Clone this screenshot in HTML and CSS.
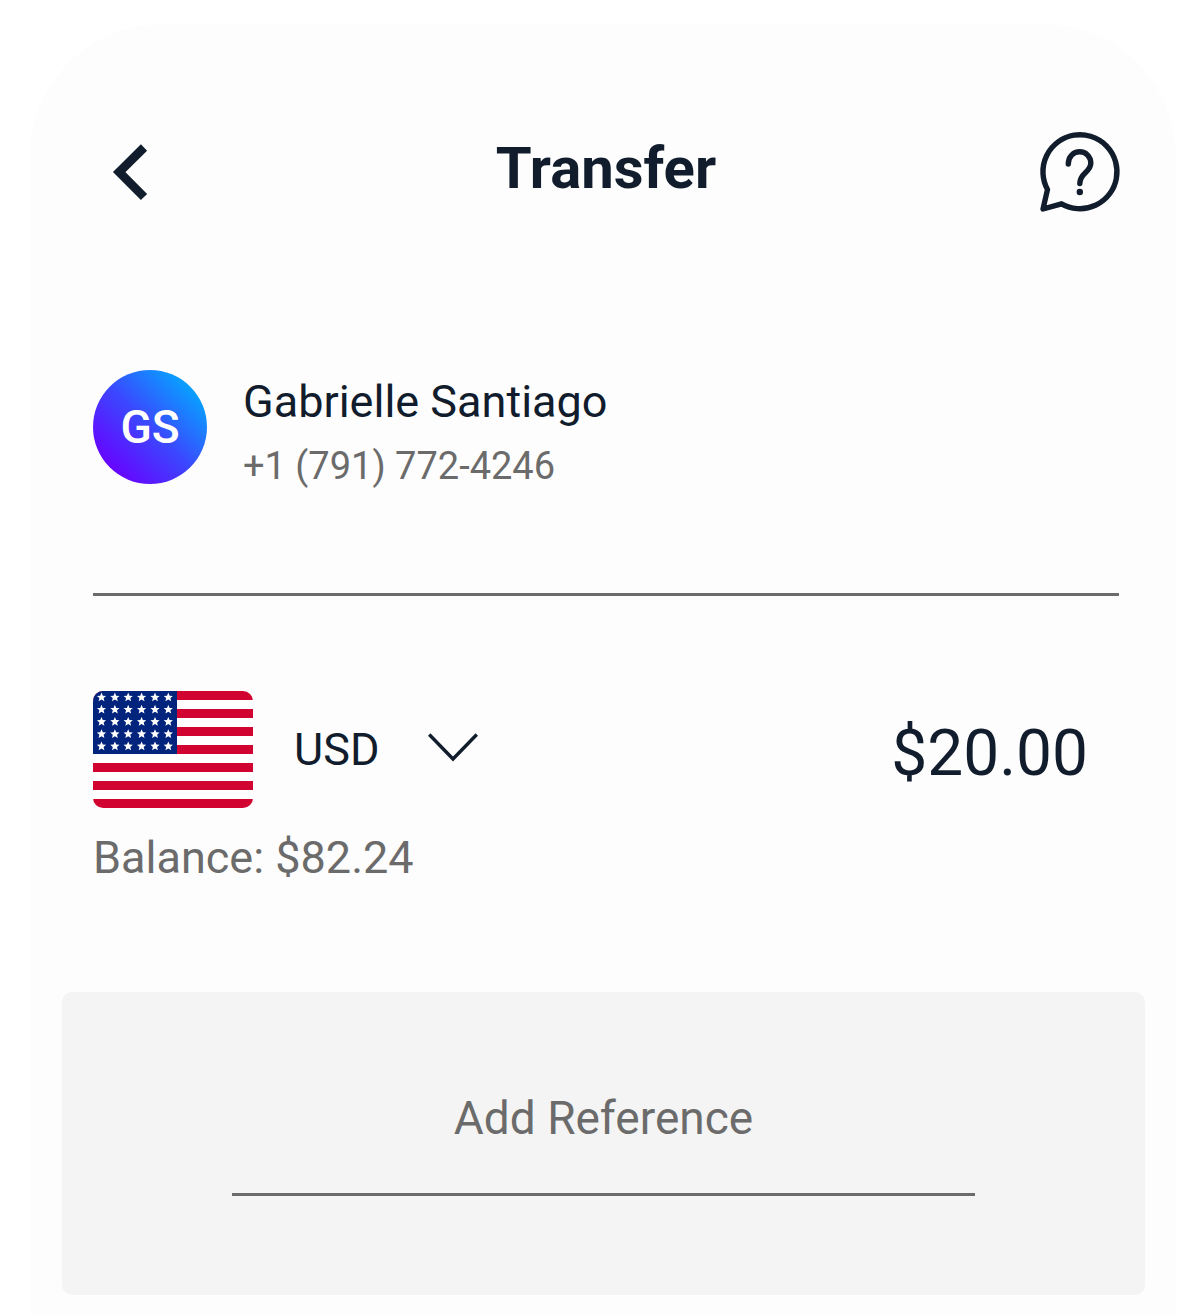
FILE: index.html
```html
<!DOCTYPE html>
<html lang="en">
<head>
  <meta charset="UTF-8">
  <meta name="viewport" content="width=device-width, initial-scale=1.0">
  <title>Transfer</title>
  <link rel="stylesheet" href="styles.css">
</head>
<body>
  <main class="card">
    <header class="header">
      <button type="button" class="icon-button" aria-label="Back">
        <svg width="80" height="80" viewBox="0 0 80 80" fill="none" stroke="currentColor" stroke-width="8.8">
          <path d="M51 15.5 L26.2 40 L51 65"/>
        </svg>
      </button>
      <h1 class="title">Transfer</h1>
      <button type="button" class="icon-button" aria-label="Help">
        <svg width="80" height="80" viewBox="0 0 80 80" fill="none" stroke="currentColor" stroke-width="5.4" stroke-linecap="round" stroke-linejoin="round">
          <path d="M8.5 57.5 A37 37 0 1 1 22.5 71.8 L4 77 Z"/>
          <path d="M29.3 32 C29.3 24.5 34.5 19.8 40.7 19.8 C47 19.8 51.8 24.8 51.8 31 C51.8 40.5 40.8 40.5 40.8 51.5"/>
          <circle cx="40.8" cy="60" r="3.2" fill="currentColor" stroke="none"/>
        </svg>
      </button>
    </header>

    <section class="recipient">
      <div class="avatar">GS</div>
      <div class="recipient-info">
        <p class="name">Gabrielle Santiago</p>
        <p class="phone">+1 (791) 772-4246</p>
      </div>
    </section>

    <section class="payment">
      <div class="payment-row">
        <svg class="flag" width="160" height="117" viewBox="0 0 160 117" aria-hidden="true">
          <defs>
            <path id="star" fill="#fff" d="M0 -4.8 L1.3 -1.7 L4.6 -1.5 L2.1 0.7 L2.9 3.9 L0 2.2 L-2.9 3.9 L-2.1 0.7 L-4.6 -1.5 L-1.3 -1.7 Z"/>
            <g id="star-row">
              <use href="#star" x="8.5"/>
              <use href="#star" x="21.9"/>
              <use href="#star" x="35.2"/>
              <use href="#star" x="48.6"/>
              <use href="#star" x="62"/>
              <use href="#star" x="75.3"/>
            </g>
          </defs>
          <rect width="160" height="117" fill="#fff"/>
          <path fill="#d10330" d="M0 0h160v9H0z M0 18h160v9H0z M0 36h160v9H0z M0 54h160v9H0z M0 72h160v9H0z M0 90h160v9H0z M0 108h160v9H0z"/>
          <rect width="84" height="63" fill="#02247c"/>
          <use href="#star-row" y="6.4"/>
          <use href="#star-row" y="18.6"/>
          <use href="#star-row" y="30.8"/>
          <use href="#star-row" y="43"/>
          <use href="#star-row" y="55.3"/>
        </svg>
        <div class="currency">
          <select class="currency-select" aria-label="Currency">
            <option selected>USD</option>
          </select>
          <svg class="chevron" width="50" height="30" viewBox="0 0 50 30" fill="none" stroke="currentColor" stroke-width="3.4" aria-hidden="true">
            <path d="M1.2 1.5 L25 26 L48.8 1.5"/>
          </svg>
        </div>
        <input class="amount" type="text" inputmode="decimal" value="$20.00" aria-label="Amount">
      </div>
      <p class="balance">Balance: $82.24</p>
    </section>

    <section class="reference">
      <input class="reference-input" type="text" placeholder="Add Reference" aria-label="Add Reference">
    </section>
  </main>
</body>
</html>
```
FILE: styles.css
```css
* {
  margin: 0;
  padding: 0;
  box-sizing: border-box;
  font-family: Roboto, Arial, sans-serif;
}

body {
  background-color: #fff;
  color: #111c2c;
  padding: 24px 20px 0 30px;
}

.card {
  background-color: #fdfdfd;
  border-radius: 132px 132px 0 0;
  padding: 108px 31px 20px 32px;
}

/* Header */
.header {
  display: flex;
  justify-content: space-between;
  align-items: flex-start;
  margin: 0 26px 0 31px;
}

.title {
  font-size: 58px;
  font-weight: 700;
  line-height: 72px;
}

.icon-button {
  width: 80px;
  height: 80px;
  border: none;
  background: none;
  color: inherit;
  cursor: pointer;
}

.icon-button svg {
  display: block;
  overflow: visible;
}

/* Recipient */
.recipient {
  display: flex;
  align-items: flex-start;
  gap: 36px;
  margin: 158px 26px 0 31px;
  padding-bottom: 95px;
  border-bottom: 3px solid #6b6b6b;
}

.avatar {
  flex-shrink: 0;
  width: 114px;
  height: 114px;
  border-radius: 50%;
  background: linear-gradient(45deg, #6a00ff 12%, #3b48ff 50%, #0a9dff 84%);
  color: #fff;
  font-size: 46px;
  font-weight: 500;
  line-height: 114px;
  text-align: center;
}

.name {
  font-size: 45px;
  line-height: 64px;
}

.phone {
  color: #6b6b6b;
  font-size: 38px;
  line-height: 64px;
}

/* Payment */
.payment {
  padding: 95px 26px 0 31px;
}

.payment-row {
  display: flex;
  align-items: center;
  gap: 41px;
}

.flag {
  display: block;
  flex-shrink: 0;
  border-radius: 10px;
}

.currency {
  position: relative;
  width: 184px;
}

.currency-select {
  width: 100%;
  height: 64px;
  appearance: none;
  border: none;
  background: none;
  color: inherit;
  font-size: 45px;
  cursor: pointer;
}

.chevron {
  position: absolute;
  top: 15px;
  right: 0;
  pointer-events: none;
}

.amount {
  flex: 1;
  min-width: 0;
  height: 80px;
  padding: 8px 31px 0 0;
  border: none;
  background: none;
  color: inherit;
  font-size: 64px;
  text-align: right;
}

.balance {
  margin-top: 22px;
  color: #6b6b6b;
  font-size: 45px;
  line-height: 56px;
}

/* Reference */
.reference {
  margin-top: 106px;
  padding: 88px 170px 99px;
  border-radius: 10px;
  background-color: #f4f4f4;
}

.reference-input {
  display: block;
  width: 100%;
  height: 116px;
  padding-bottom: 37px;
  border: none;
  border-bottom: 3px solid #6b6b6b;
  background: none;
  color: #111c2c;
  font-size: 46px;
  text-align: center;
}

.reference-input::placeholder {
  color: #6b6b6b;
}
```
